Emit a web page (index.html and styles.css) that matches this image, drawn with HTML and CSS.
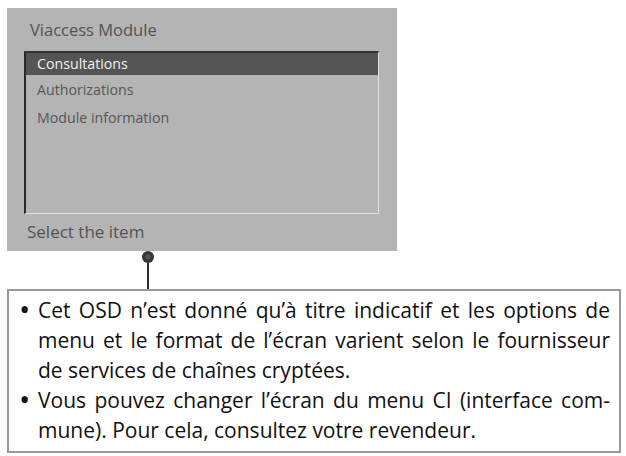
FILE: index.html
```html
<!DOCTYPE html>
<html lang="fr">
<head>
<meta charset="utf-8">
<link rel="stylesheet" href="styles.css">
</head>
<body>
<div class="osd">
  <div class="osd-title">Viaccess Module</div>
  <div class="list">
    <div class="item selected">Consultations</div>
    <div class="item">Authorizations</div>
    <div class="item">Module information</div>
  </div>
  <div class="status">Select the item</div>
</div>
<div class="connector">
  <div class="dot"></div>
  <div class="stem"></div>
</div>
<div class="note">
  <ul class="notes">
    <li><span class="bullet">•</span><span class="txt">Cet OSD n’est donné qu’à titre indicatif et les options de menu et le format de l’écran varient selon le fournisseur de services de chaînes cryptées.</span></li>
    <li><span class="bullet">•</span><span class="txt">Vous pouvez changer l’écran du menu CI (interface com-mune). Pour cela, consultez votre revendeur.</span></li>
  </ul>
</div>
</body>
</html>
```
FILE: styles.css
```css
html, body {
  margin: 0;
  padding: 0;
  background: #ffffff;
}
body {
  font-family: "Open Sans", Lato, sans-serif;
  width: 626px;
  height: 456px;
  overflow: hidden;
}
.osd {
  margin: 8px 0 0 7px;
  width: 390px;
  height: 243px;
  background: #b4b4b4;
  box-sizing: border-box;
  padding-top: 10px;
  display: flex;
  flex-direction: column;
}
.osd-title {
  margin-left: 23px;
  font-size: 16.5px;
  line-height: 24px;
  color: #535353;
}
.list {
  margin: 9px 0 0 17px;
  width: 355px;
  height: 163px;
  box-sizing: border-box;
  border-top: 2px solid #333333;
  border-left: 2px solid #2a2a2a;
  border-right: 1px solid #e2e2e2;
  border-bottom: 1px solid #e2e2e2;
}
.item {
  height: 27.5px;
  line-height: 24px;
  padding-left: 11px;
  font-size: 14.2px;
  color: #565656;
}
.item.selected {
  height: 22px;
  line-height: 21px;
  background: #545454;
  color: #f2f2f2;
  margin-bottom: 3px;
}
.status {
  margin: 6px 0 0 20px;
  font-size: 17px;
  line-height: 24px;
  color: #535353;
}
.connector {
  margin-left: 142px;
  width: 12px;
  display: flex;
  flex-direction: column;
  align-items: center;
}
.dot {
  width: 12px;
  height: 12px;
  border-radius: 50%;
  background: radial-gradient(circle, #555 0 2px, #3a3a3a 3px, #333 6px);
}
.stem {
  width: 2px;
  height: 26px;
  background: #2e2e2e;
}
.note {
  margin-left: 7px;
  width: 614px;
  height: 164px;
  box-sizing: border-box;
  border: 2px solid #9a9a9a;
  padding: 4px 9px 0 11px;
}
.notes {
  list-style: none;
  margin: 0;
  padding: 0;
}
.notes li {
  display: flex;
  align-items: flex-start;
  font-size: 21px;
  line-height: 30px;
  color: #111111;
}
.bullet {
  flex: 0 0 19px;
  font-size: 30px;
  line-height: 27px;
  margin-left: -1px;
}
.txt {
  flex: 1;
  text-align: justify;
}
```
